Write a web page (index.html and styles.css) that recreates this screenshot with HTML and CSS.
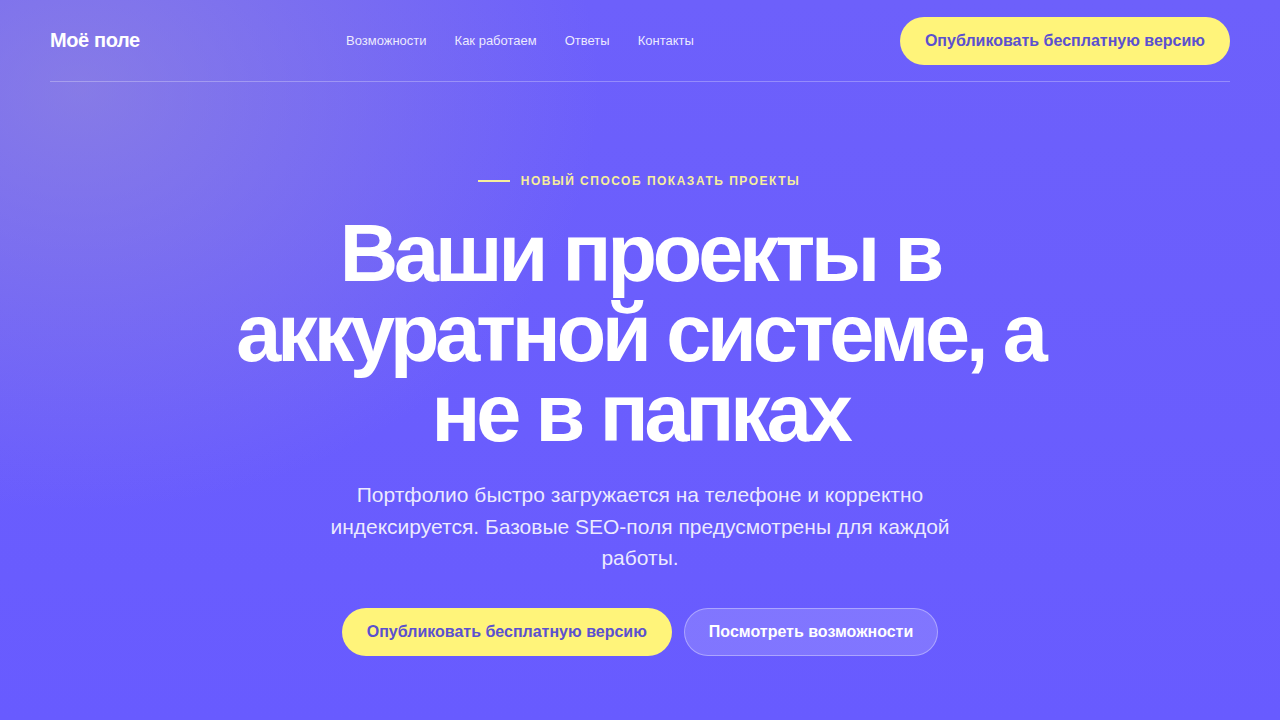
FILE: index.html
```html
<!DOCTYPE html>
<html lang="ru">
<head>
<meta charset="utf-8">
<title>Моё поле</title>
<link rel="stylesheet" href="styles.css">
</head>
<body>
<div class="page">
  <header class="header">
    <a class="logo" href="#">Моё поле</a>
    <nav class="nav">
      <a href="#">Возможности</a>
      <a href="#">Как работаем</a>
      <a href="#">Ответы</a>
      <a href="#">Контакты</a>
    </nav>
    <a class="btn btn-yellow" href="#">Опубликовать бесплатную версию</a>
  </header>
  <main class="hero">
    <div class="eyebrow"><span class="eyebrow-line"></span>Новый способ показать проекты</div>
    <h1 class="title">Ваши проекты в аккуратной системе, а не в папках</h1>
    <p class="lead">Портфолио быстро загружается на телефоне и корректно индексируется. Базовые SEO-поля предусмотрены для каждой работы.</p>
    <div class="actions">
      <a class="btn btn-yellow" href="#">Опубликовать бесплатную версию</a>
      <a class="btn btn-ghost" href="#">Посмотреть возможности</a>
    </div>
  </main>
</div>
</body>
</html>
```
FILE: styles.css
```css
* { box-sizing: border-box; }
html, body { margin: 0; padding: 0; }
body {
  font-family: "Liberation Sans", Arial, sans-serif;
  color: #fff;
  background: #6a5cff;
  min-height: 720px;
  overflow: hidden;
}
.page {
  min-height: 720px;
  background:
    radial-gradient(ellipse 520px 420px at 80px 90px, rgba(160,150,210,0.5), rgba(160,150,210,0) 100%),
    linear-gradient(180deg, #6d60fb 0%, #685bff 100%);
  padding: 0 50px;
}
a { text-decoration: none; color: inherit; }
.header {
  height: 82px;
  display: flex;
  align-items: center;
  justify-content: space-between;
  border-bottom: 1px solid rgba(255,255,255,0.28);
}
.logo {
  font-size: 20px;
  font-weight: 700;
  letter-spacing: -0.4px;
  color: #fff;
  width: 296px;
}
.nav {
  display: flex;
  gap: 28px;
  font-size: 13px;
  color: rgba(255,255,255,0.88);
  margin-right: auto;
}
.btn {
  display: inline-flex;
  align-items: center;
  justify-content: center;
  height: 48px;
  padding: 0 25px;
  border-radius: 24px;
  font-size: 16px;
  font-weight: 700;
}
.btn-yellow {
  background: #fff47a;
  color: #5b50cf;
}
.btn-ghost {
  padding: 0 24px;
  background: rgba(255,255,255,0.16);
  border: 1px solid rgba(255,255,255,0.35);
  color: #fff;
}
.hero {
  display: flex;
  flex-direction: column;
  align-items: center;
  text-align: center;
  padding-top: 92px;
}
.eyebrow {
  display: flex;
  align-items: center;
  gap: 11px;
  font-size: 12px;
  font-weight: 700;
  letter-spacing: 1.5px;
  text-transform: uppercase;
  color: #f6ee9c;
  height: 14px;
  margin-left: -2px;
}
.eyebrow-line {
  display: block;
  width: 32px;
  height: 2px;
  background: #f6ee9c;
}
.title {
  margin: 25px 0 0;
  font-size: 81px;
  line-height: 80px;
  font-weight: 700;
  letter-spacing: -4.1px;
  max-width: 860px;
}
.lead {
  margin: 26px 0 0;
  max-width: 640px;
  font-size: 21px;
  line-height: 31.5px;
  color: rgba(255,255,255,0.88);
}
.actions {
  display: flex;
  gap: 12px;
  margin-top: 34px;
}
```
